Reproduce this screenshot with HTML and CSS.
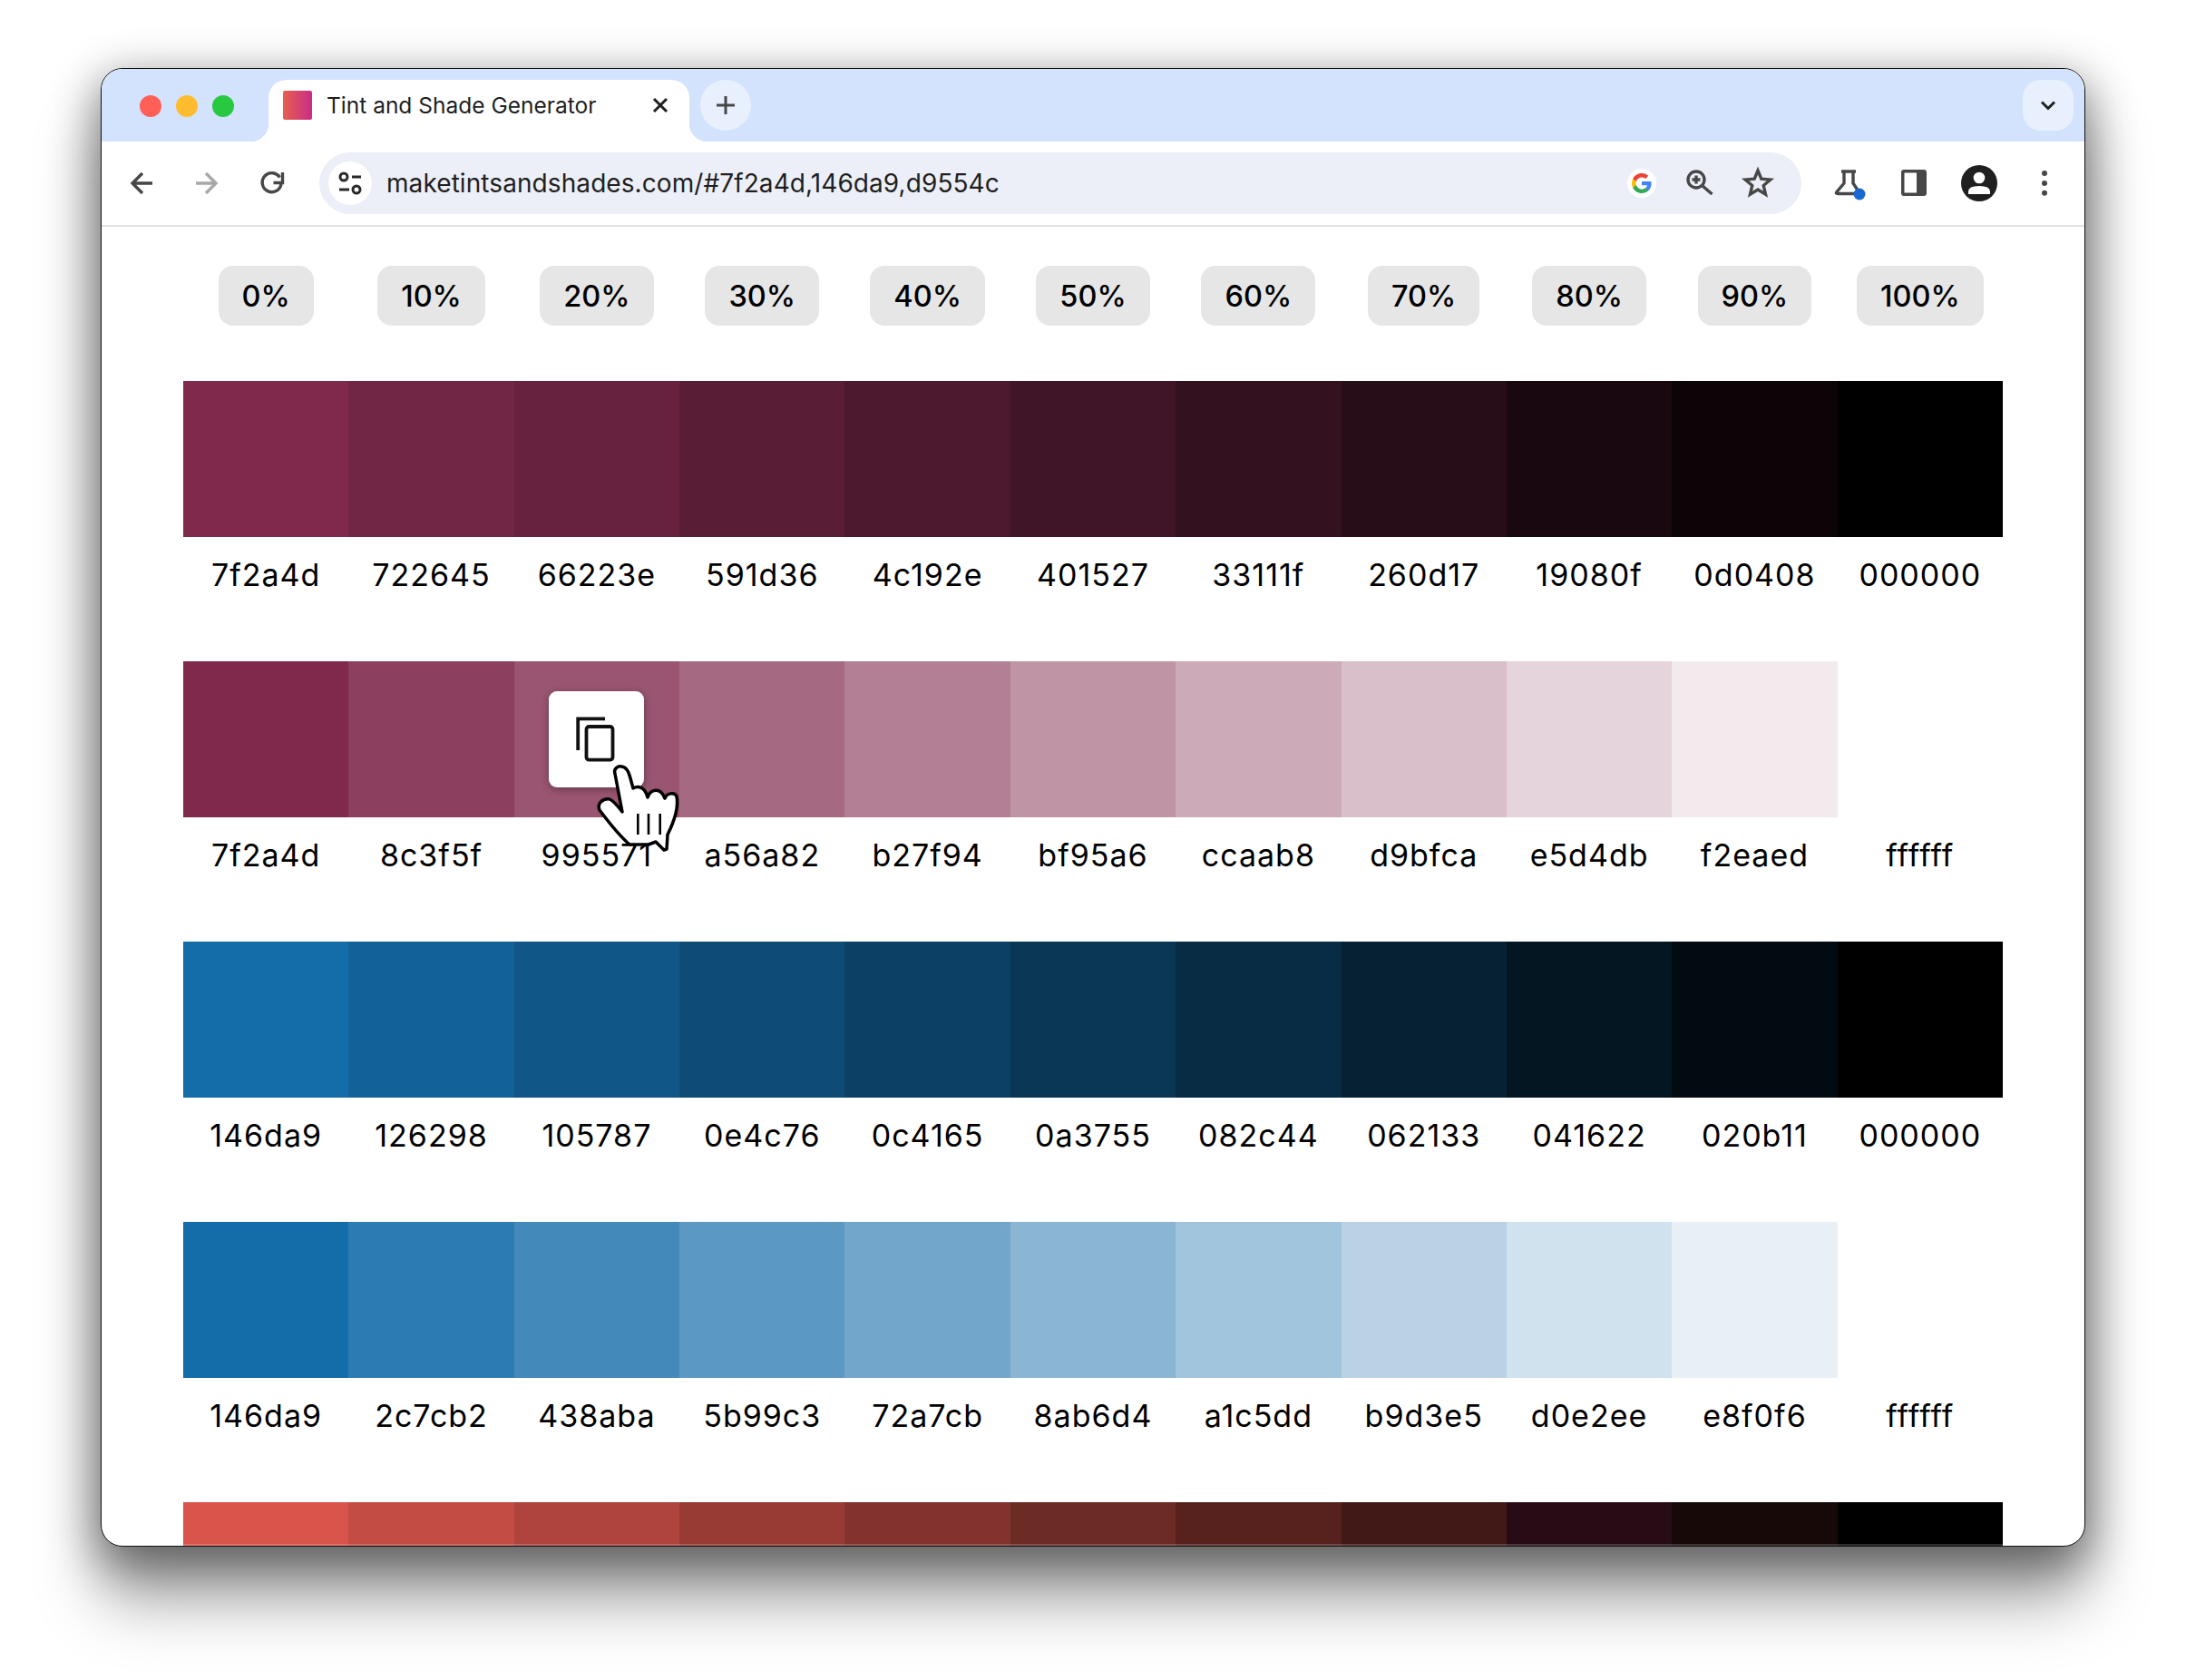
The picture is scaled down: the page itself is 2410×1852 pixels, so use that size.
FILE: index.html
```html
<!DOCTYPE html>
<html lang="en">
<head>
  <meta charset="UTF-8" />
  <title>Tint and Shade Generator</title>
  <link rel="stylesheet" href="styles.css">
</head>
<body>

  <div class="window">

    <div class="tabstrip">
      <div class="traffic">
        <span class="dot dot-red"></span>
        <span class="dot dot-yellow"></span>
        <span class="dot dot-green"></span>
      </div>
      <div class="tab">
        <span class="favicon"></span>
        <span class="tab-title">Tint and Shade Generator</span>
        <svg class="tab-close" width="24" height="24" viewBox="0 0 24 24"><path d="M5 5L19 19M19 5L5 19"/></svg>
      </div>
      <div class="newtab">
        <svg class="newtab-plus" width="24" height="24" viewBox="0 0 24 24"><path d="M12 2V22M2 12H22"/></svg>
      </div>
      <div class="tabsearch">
        <svg class="tabsearch-chevron" width="24" height="24" viewBox="0 0 24 24"><path d="M5 8.5L12 15.5L19 8.5"/></svg>
      </div>
    </div>

    <div class="toolbar">
      <div class="tool">
        <svg class="icon" width="40" height="40" viewBox="0 0 40 40"><path d="M32 20H11M21 9L10 20L21 31"/></svg>
      </div>
      <div class="tool">
        <svg class="icon icon-off" width="40" height="40" viewBox="0 0 40 40"><path d="M8 20H29M19 9L30 20L19 31"/></svg>
      </div>
      <div class="tool">
        <svg class="icon" width="40" height="40" viewBox="0 0 40 40"><path d="M28.5 13.5A10.5 10.5 0 1 0 30 21"/><path d="M31.5 8V19.5H21.5"/></svg>
      </div>

      <div class="omnibox">
        <div class="siteinfo">
          <svg class="icon icon-thin" width="48" height="48" viewBox="0 0 48 48">
            <circle cx="17" cy="17" r="4"/><path d="M26 17H36"/>
            <path d="M12 31H23"/><circle cx="31" cy="31" r="4"/>
          </svg>
        </div>
        <span class="url">maketintsandshades.com/#7f2a4d,146da9,d9554c</span>
        <div class="omni-tool">
          <svg width="40" height="40" viewBox="-8 -8 40 40">
            <circle cx="12" cy="12" r="16" fill="#fff"/>
            <path fill="#4285f4" d="M22.56 12.25c0-.78-.07-1.53-.2-2.25H12v4.26h5.92c-.26 1.37-1.04 2.53-2.21 3.31v2.77h3.57c2.08-1.92 3.28-4.74 3.28-8.09z"/>
            <path fill="#34a853" d="M12 23c2.97 0 5.46-.98 7.28-2.66l-3.57-2.77c-.98.66-2.23 1.06-3.71 1.06-2.86 0-5.29-1.93-6.16-4.53H2.18v2.84C3.99 20.53 7.7 23 12 23z"/>
            <path fill="#fbbc05" d="M5.84 14.09c-.22-.66-.35-1.36-.35-2.09s.13-1.43.35-2.09V7.07H2.18C1.43 8.55 1 10.22 1 12s.43 3.45 1.18 4.93l2.85-2.22.81-.62z"/>
            <path fill="#ea4335" d="M12 5.38c1.62 0 3.06.56 4.21 1.64l3.15-3.15C17.45 2.09 14.97 1 12 1 7.7 1 3.99 3.47 2.18 7.07l3.66 2.84c.87-2.6 3.3-4.53 6.16-4.53z"/>
          </svg>
        </div>
        <div class="omni-tool">
          <svg class="icon" width="40" height="40" viewBox="0 0 40 40">
            <circle cx="16" cy="16" r="9"/><path d="M22.5 22.5L33.5 32"/><path d="M16 11.5V20.5M11.5 16H20.5"/>
          </svg>
        </div>
        <div class="omni-tool">
          <svg class="icon" width="40" height="40" viewBox="0 0 40 40">
            <path d="M20 6L23.8 15.2L33.8 16L26.2 22.5L28.5 32.2L20 27L11.5 32.2L13.8 22.5L6.2 16L16.2 15.2Z"/>
          </svg>
        </div>
      </div>

      <div class="tool">
        <svg class="icon" width="40" height="40" viewBox="0 0 40 40">
          <path d="M12 7H28M15 7V20L7 29.5Q5.5 31.5 8 31.5H27M25 7V20L31 29"/>
          <circle class="badge" cx="32" cy="32" r="6.5"/>
        </svg>
      </div>
      <div class="tool">
        <svg width="40" height="40" viewBox="0 0 40 40">
          <rect x="6" y="5" width="28" height="29" rx="3" fill="#474747"/>
          <rect x="9.5" y="8.5" width="13.5" height="22" fill="#fff"/>
        </svg>
      </div>
      <div class="tool">
        <svg width="40" height="40" viewBox="0 0 40 40">
          <circle cx="20" cy="20" r="20" fill="#1f1f1f"/>
          <circle cx="20" cy="14" r="6.3" fill="#fff"/>
          <path d="M8 32V29Q8 23 20 23Q32 23 32 29V32Z" fill="#fff"/>
        </svg>
      </div>
      <div class="tool">
        <svg width="40" height="40" viewBox="0 0 40 40" fill="#474747">
          <circle cx="20" cy="9" r="3"/><circle cx="20" cy="20" r="3"/><circle cx="20" cy="30.7" r="3"/>
        </svg>
      </div>
    </div>

    <div class="page">
      <div class="steps">
        <span class="step">0%</span>
        <span class="step">10%</span>
        <span class="step">20%</span>
        <span class="step">30%</span>
        <span class="step">40%</span>
        <span class="step">50%</span>
        <span class="step">60%</span>
        <span class="step">70%</span>
        <span class="step">80%</span>
        <span class="step">90%</span>
        <span class="step">100%</span>
      </div>

      <div class="palette">
        <div class="cell"><div class="swatch" style="background:#7f2a4d"></div><div class="hex">7f2a4d</div></div>
        <div class="cell"><div class="swatch" style="background:#722645"></div><div class="hex">722645</div></div>
        <div class="cell"><div class="swatch" style="background:#66223e"></div><div class="hex">66223e</div></div>
        <div class="cell"><div class="swatch" style="background:#591d36"></div><div class="hex">591d36</div></div>
        <div class="cell"><div class="swatch" style="background:#4c192e"></div><div class="hex">4c192e</div></div>
        <div class="cell"><div class="swatch" style="background:#401527"></div><div class="hex">401527</div></div>
        <div class="cell"><div class="swatch" style="background:#33111f"></div><div class="hex">33111f</div></div>
        <div class="cell"><div class="swatch" style="background:#260d17"></div><div class="hex">260d17</div></div>
        <div class="cell"><div class="swatch" style="background:#19080f"></div><div class="hex">19080f</div></div>
        <div class="cell"><div class="swatch" style="background:#0d0408"></div><div class="hex">0d0408</div></div>
        <div class="cell"><div class="swatch" style="background:#000000"></div><div class="hex">000000</div></div>
      </div>

      <div class="palette">
        <div class="cell"><div class="swatch" style="background:#7f2a4d"></div><div class="hex">7f2a4d</div></div>
        <div class="cell"><div class="swatch" style="background:#8c3f5f"></div><div class="hex">8c3f5f</div></div>
        <div class="cell">
          <div class="swatch" style="background:#995571">
            <div class="copy">
              <svg class="copy-icon" width="60" height="60" viewBox="0 0 60 60">
                <path d="M9.2 42V7.3H39"/>
                <rect x="18.5" y="16" width="29" height="36.7" rx="3"/>
              </svg>
              <svg class="hand" width="100" height="110" viewBox="95 105 100 110">
                <path class="hand-shape" d="M118 123C116 117 122 114 125 115C130 115 133 120 135 128L138 139C143 136 151 137 154 149C157 140 168 137 173 150C175 144 184 143 186 148C188 158 186 170 176 190L175 206L172 207L163 198L155 201H134C125 193 110 175 101 163C98 156 104 150 112 151C117 153 122 160 126 165Z"/>
                <path class="hand-line" d="M143.3 167V190M155 167V190M167.7 167V190"/>
              </svg>
            </div>
          </div>
          <div class="hex">995571</div>
        </div>
        <div class="cell"><div class="swatch" style="background:#a56a82"></div><div class="hex">a56a82</div></div>
        <div class="cell"><div class="swatch" style="background:#b27f94"></div><div class="hex">b27f94</div></div>
        <div class="cell"><div class="swatch" style="background:#bf95a6"></div><div class="hex">bf95a6</div></div>
        <div class="cell"><div class="swatch" style="background:#ccaab8"></div><div class="hex">ccaab8</div></div>
        <div class="cell"><div class="swatch" style="background:#d9bfca"></div><div class="hex">d9bfca</div></div>
        <div class="cell"><div class="swatch" style="background:#e5d4db"></div><div class="hex">e5d4db</div></div>
        <div class="cell"><div class="swatch" style="background:#f2eaed"></div><div class="hex">f2eaed</div></div>
        <div class="cell"><div class="swatch" style="background:#ffffff"></div><div class="hex">ffffff</div></div>
      </div>

      <div class="palette">
        <div class="cell"><div class="swatch" style="background:#146da9"></div><div class="hex">146da9</div></div>
        <div class="cell"><div class="swatch" style="background:#126298"></div><div class="hex">126298</div></div>
        <div class="cell"><div class="swatch" style="background:#105787"></div><div class="hex">105787</div></div>
        <div class="cell"><div class="swatch" style="background:#0e4c76"></div><div class="hex">0e4c76</div></div>
        <div class="cell"><div class="swatch" style="background:#0c4165"></div><div class="hex">0c4165</div></div>
        <div class="cell"><div class="swatch" style="background:#0a3755"></div><div class="hex">0a3755</div></div>
        <div class="cell"><div class="swatch" style="background:#082c44"></div><div class="hex">082c44</div></div>
        <div class="cell"><div class="swatch" style="background:#062133"></div><div class="hex">062133</div></div>
        <div class="cell"><div class="swatch" style="background:#041622"></div><div class="hex">041622</div></div>
        <div class="cell"><div class="swatch" style="background:#020b11"></div><div class="hex">020b11</div></div>
        <div class="cell"><div class="swatch" style="background:#000000"></div><div class="hex">000000</div></div>
      </div>

      <div class="palette">
        <div class="cell"><div class="swatch" style="background:#146da9"></div><div class="hex">146da9</div></div>
        <div class="cell"><div class="swatch" style="background:#2c7cb2"></div><div class="hex">2c7cb2</div></div>
        <div class="cell"><div class="swatch" style="background:#438aba"></div><div class="hex">438aba</div></div>
        <div class="cell"><div class="swatch" style="background:#5b99c3"></div><div class="hex">5b99c3</div></div>
        <div class="cell"><div class="swatch" style="background:#72a7cb"></div><div class="hex">72a7cb</div></div>
        <div class="cell"><div class="swatch" style="background:#8ab6d4"></div><div class="hex">8ab6d4</div></div>
        <div class="cell"><div class="swatch" style="background:#a1c5dd"></div><div class="hex">a1c5dd</div></div>
        <div class="cell"><div class="swatch" style="background:#b9d3e5"></div><div class="hex">b9d3e5</div></div>
        <div class="cell"><div class="swatch" style="background:#d0e2ee"></div><div class="hex">d0e2ee</div></div>
        <div class="cell"><div class="swatch" style="background:#e8f0f6"></div><div class="hex">e8f0f6</div></div>
        <div class="cell"><div class="swatch" style="background:#ffffff"></div><div class="hex">ffffff</div></div>
      </div>

      <div class="palette">
        <div class="cell"><div class="swatch" style="background:#d9554c"></div></div>
        <div class="cell"><div class="swatch" style="background:#c34d44"></div></div>
        <div class="cell"><div class="swatch" style="background:#ae443d"></div></div>
        <div class="cell"><div class="swatch" style="background:#983b35"></div></div>
        <div class="cell"><div class="swatch" style="background:#82332e"></div></div>
        <div class="cell"><div class="swatch" style="background:#6d2b26"></div></div>
        <div class="cell"><div class="swatch" style="background:#57221e"></div></div>
        <div class="cell"><div class="swatch" style="background:#411a17"></div></div>
        <div class="cell"><div class="swatch" style="background:#270c15"></div></div>
        <div class="cell"><div class="swatch" style="background:#160908"></div></div>
        <div class="cell"><div class="swatch" style="background:#000000"></div></div>
      </div>
    </div>

  </div>

</body>
</html>
```

FILE: styles.css
```css
* {
  box-sizing: border-box;
}

html,
body {
  height: 100%;
}

body {
  margin: 0;
  padding: 75px 0 0 111px;
  background: #fff;
  font-family: 'Inter', 'Liberation Sans', sans-serif;
  color: #000;
  overflow: hidden;
}

.window {
  position: relative;
  width: 2188px;
  height: 1630px;
  border: 1px solid #111;
  border-radius: 24px;
  background: #fff;
  overflow: hidden;
  box-shadow: 0 14px 50px 4px rgba(0, 0, 0, 0.45), 0 60px 70px 0 rgba(0, 0, 0, 0.35);
}

.window::after {
  content: "";
  position: absolute;
  left: 0;
  right: 0;
  bottom: 0;
  height: 2px;
  background: rgba(255, 255, 255, 0.18);
}

/* tab strip */

.tabstrip {
  display: flex;
  align-items: flex-start;
  height: 80px;
  padding: 12px 12px 0 42px;
  background: #d3e3fd;
}

.traffic {
  display: flex;
  align-items: center;
  gap: 16px;
  height: 58px;
  margin-right: 38px;
}

.dot {
  width: 24px;
  height: 24px;
  border-radius: 50%;
}

.dot-red { background: #ff5f57; }
.dot-yellow { background: #febc2e; }
.dot-green { background: #28c840; }

.tab {
  position: relative;
  display: flex;
  align-items: center;
  width: 464px;
  height: 68px;
  padding: 0 20px 12px 16px;
  background: #fff;
  border-radius: 20px 20px 0 0;
}

.tab::before,
.tab::after {
  content: "";
  position: absolute;
  bottom: 0;
  width: 20px;
  height: 20px;
}

.tab::before {
  left: -20px;
  background: radial-gradient(circle at 0 0, transparent 20px, #fff 20.5px);
}

.tab::after {
  right: -20px;
  background: radial-gradient(circle at 100% 0, transparent 20px, #fff 20.5px);
}

.favicon {
  width: 32px;
  height: 32px;
  margin-right: 16px;
  border-radius: 2px;
  background: linear-gradient(90deg, #e5604e, #c92c88);
}

.tab-title {
  flex: 1;
  font-size: 24.5px;
  color: #1f1f1f;
  white-space: nowrap;
}

.tab-close path,
.tabsearch-chevron path {
  fill: none;
  stroke: #1f1f1f;
  stroke-width: 3;
}

.newtab {
  display: flex;
  align-items: center;
  justify-content: center;
  width: 56px;
  height: 56px;
  margin-left: 12px;
  border-radius: 50%;
  background: #e9f0fd;
}

.newtab-plus path {
  fill: none;
  stroke: #474747;
  stroke-width: 3;
}

.tabsearch {
  display: flex;
  align-items: center;
  justify-content: center;
  width: 56px;
  height: 56px;
  margin-left: auto;
  border-radius: 20px;
  background: #e9f0fd;
}

/* toolbar */

.toolbar {
  position: relative;
  display: flex;
  align-items: center;
  height: 94px;
  padding: 0 8px;
  background: #fff;
  border-bottom: 2px solid #e3e3e3;
  border-radius: 20px 20px 0 0;
}

.tool {
  display: flex;
  align-items: center;
  justify-content: center;
  width: 72px;
  height: 72px;
  flex: none;
}

.icon path,
.icon circle {
  fill: none;
  stroke: #474747;
  stroke-width: 3.4;
}

.icon-off path {
  stroke: #a8a8a8;
}

.icon-thin path,
.icon-thin circle {
  stroke: #2a2a2a;
  stroke-width: 3;
}

.icon .badge {
  fill: #1967d2;
  stroke: none;
}

.omnibox {
  display: flex;
  align-items: center;
  flex: 1;
  height: 68px;
  margin: 0 16px;
  padding: 0 16px 0 10px;
  border-radius: 34px;
  background: #eceff7;
}

.siteinfo {
  width: 48px;
  height: 48px;
  margin-right: 16px;
  border-radius: 50%;
  background: #fff;
}

.url {
  flex: 1;
  font-size: 28px;
  letter-spacing: 0.08px;
  color: #1f1f1f;
  white-space: nowrap;
}

.omni-tool {
  display: flex;
  align-items: center;
  justify-content: center;
  width: 64px;
  height: 64px;
  flex: none;
}

/* page */

.page {
  padding: 43px 90px 0;
}

.steps,
.palette {
  display: grid;
  grid-template-columns: repeat(11, 1fr);
}

.steps {
  justify-items: center;
  margin-bottom: 61px;
}

.step {
  height: 66px;
  padding: 0 26px;
  border-radius: 16px;
  background: #e6e6e6;
  font-size: 32.5px;
  font-weight: 500;
  line-height: 67px;
}

.palette {
  margin-bottom: 76px;
}

.swatch {
  display: flex;
  align-items: center;
  justify-content: center;
  height: 172px;
}

.hex {
  margin-top: 22px;
  font-size: 34px;
  letter-spacing: 1px;
  line-height: 39px;
  text-align: center;
}

.copy {
  position: relative;
  display: flex;
  align-items: center;
  justify-content: center;
  width: 105px;
  height: 106px;
  border-radius: 9px;
  background: #fff;
  box-shadow: 0 2px 8px rgba(0, 0, 0, 0.35);
}

.copy-icon path,
.copy-icon rect {
  fill: none;
  stroke: #111;
  stroke-width: 3.8;
}

.hand {
  position: absolute;
  left: 50px;
  top: 73px;
}

.hand-shape {
  fill: #fff;
  stroke: #000;
  stroke-width: 3.5;
  stroke-linejoin: round;
}

.hand-line {
  fill: none;
  stroke: #000;
  stroke-width: 2.6;
}
```
